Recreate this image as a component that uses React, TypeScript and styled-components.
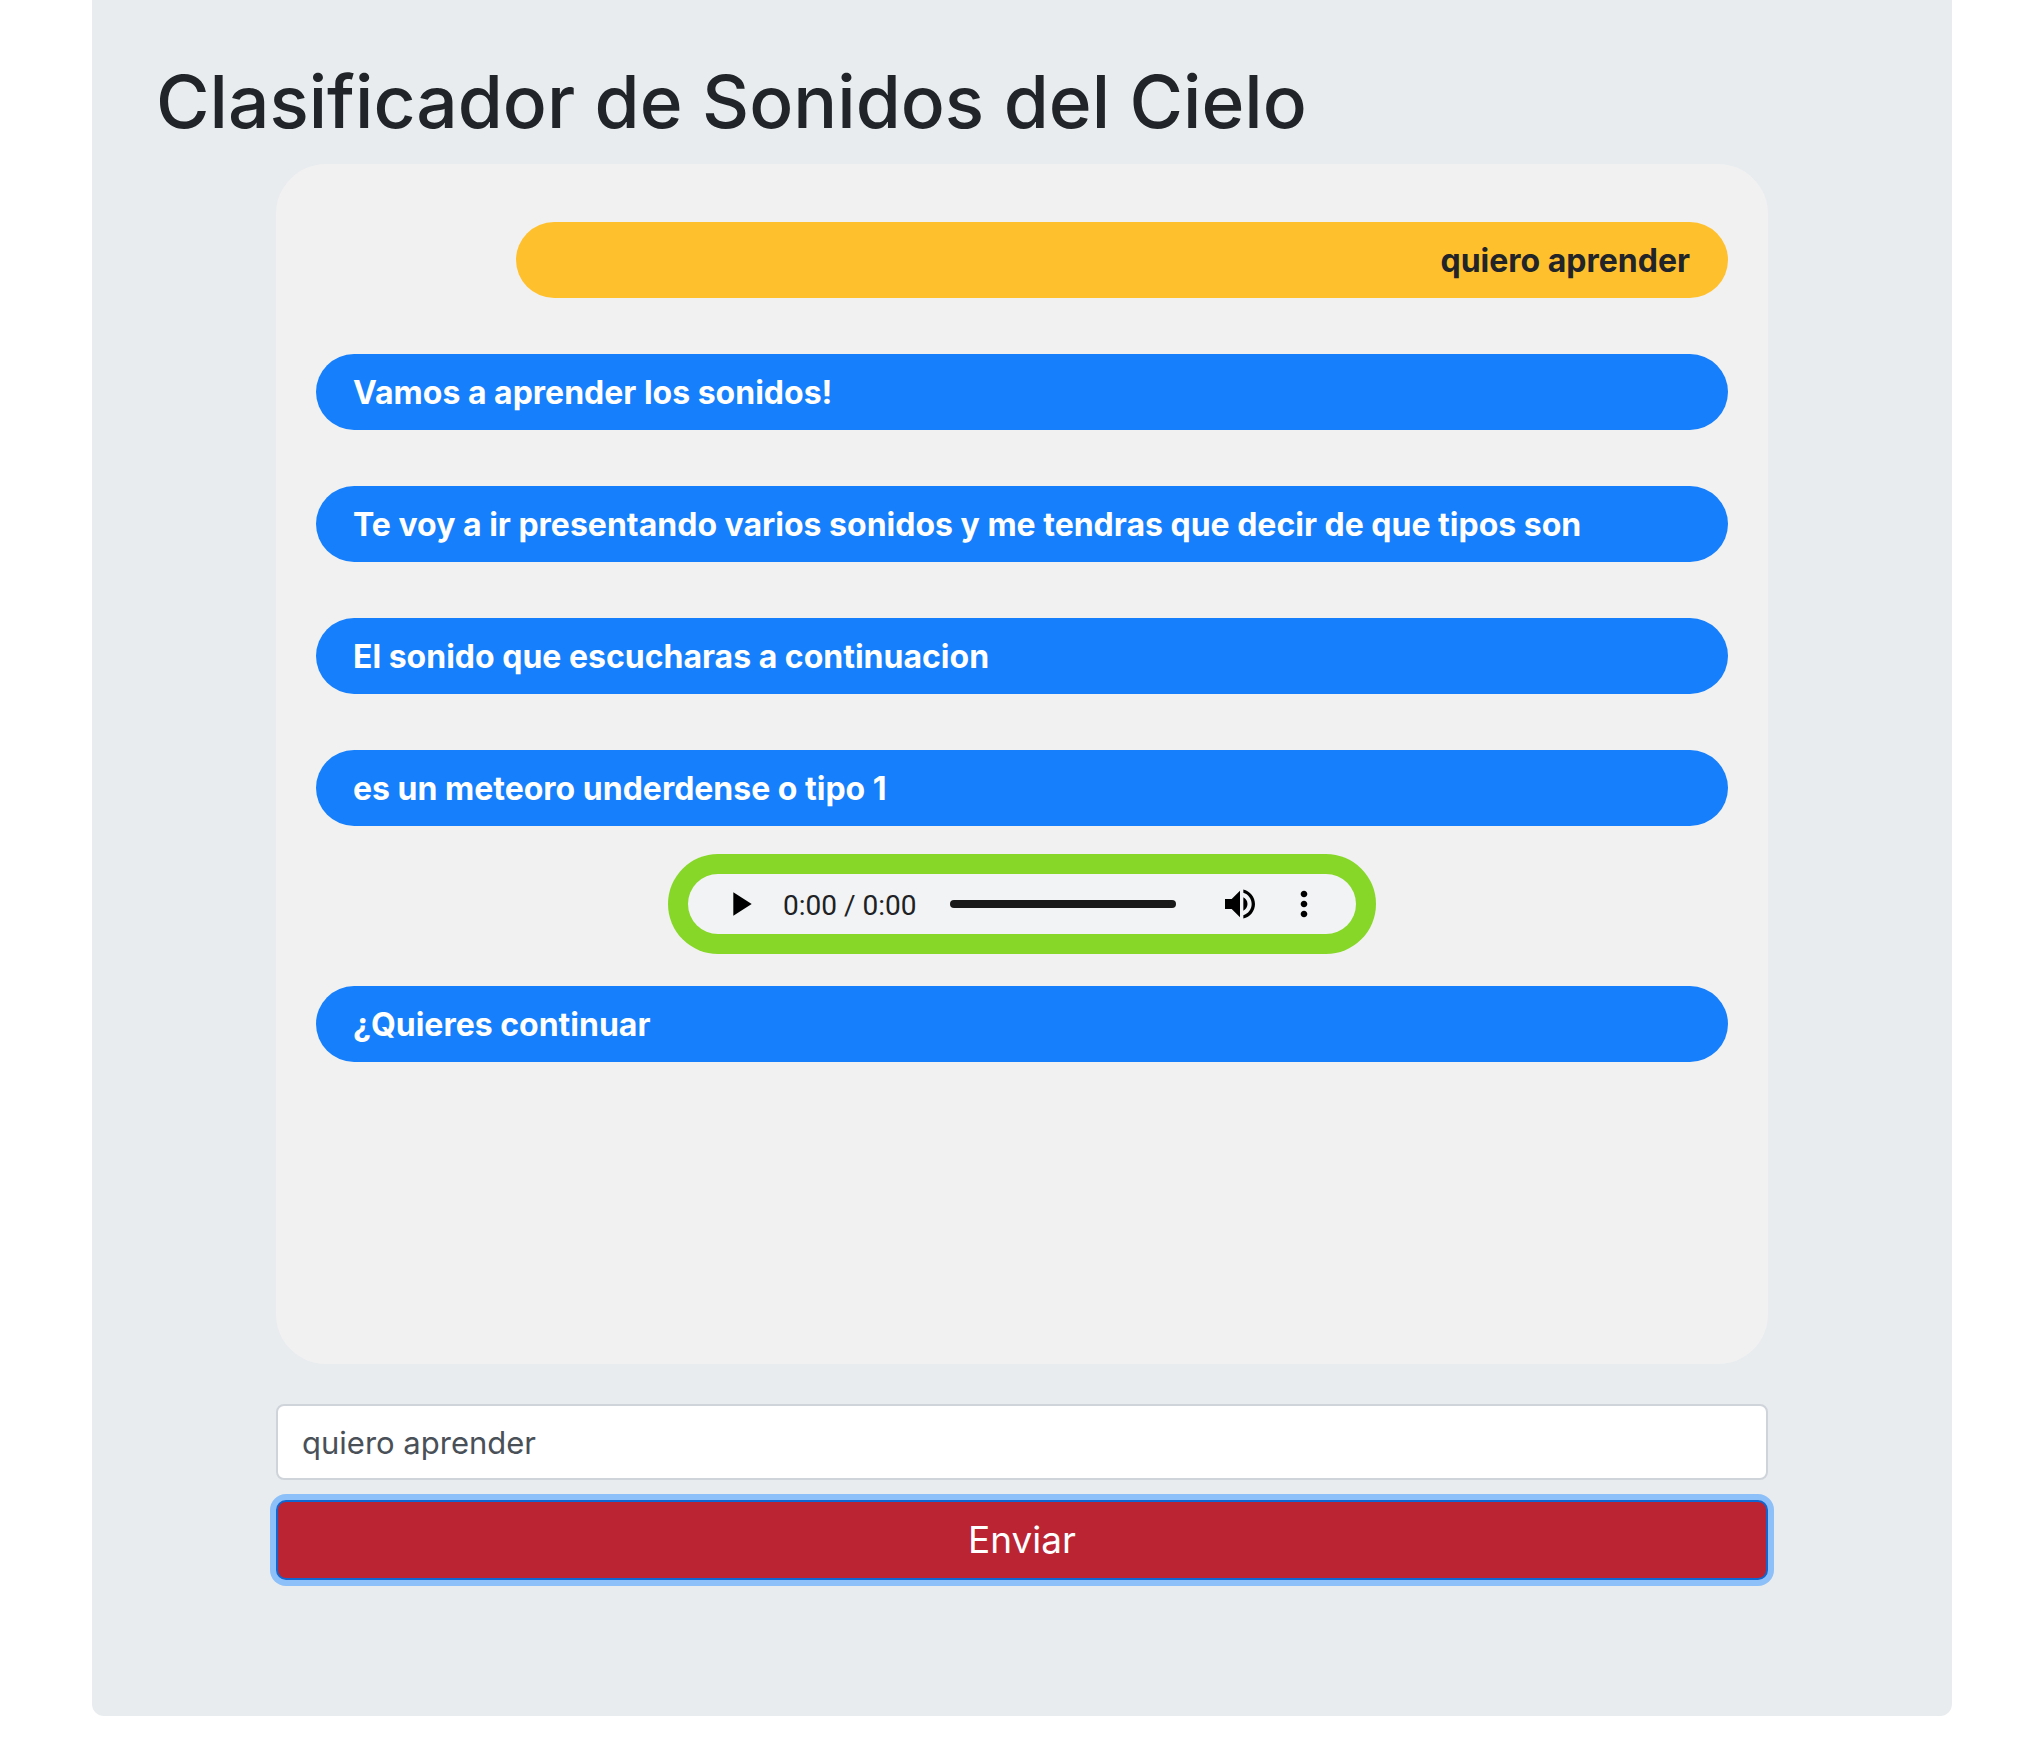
import React, { useState } from "react";
import styled, { createGlobalStyle } from "styled-components";

const GlobalStyle = createGlobalStyle`
  *, *::before, *::after { box-sizing: border-box; }
  body {
    margin: 0;
    background: #fff;
    color: #212529;
    font-family: Inter, "Liberation Sans", sans-serif;
    font-size: 32px;
    line-height: 48px;
  }
  button, input { font-family: inherit; }
`;

const Jumbotron = styled.main`
  margin: 0 68px 40px 92px;
  padding: 54px 64px 136px;
  background: #e8ecef;
  border-radius: 0 0 12px 12px;
`;

const Title = styled.h1`
  margin: 0 0 14px;
  font-size: 73px;
  font-weight: 500;
  line-height: 96px;
`;

const Content = styled.div`
  display: flex;
  flex-direction: column;
  padding: 0 120px;
`;

const Chat = styled.section`
  display: flex;
  flex-direction: column;
  min-height: 1200px;
  padding: 30px 40px;
  background: #f1f1f1;
  border-radius: 50px;
`;

const Bubble = styled.p<{ $own?: boolean }>`
  margin: 28px 0 28px ${(p) => (p.$own ? "200px" : "0")};
  padding: 15px 38px 13px 37px;
  border-radius: 38px;
  background: ${(p) => (p.$own ? "#ffc02e" : "#167ffc")};
  color: ${(p) => (p.$own ? "#212529" : "#fff")};
  font-weight: 700;
  text-align: ${(p) => (p.$own ? "right" : "left")};
`;

const PlayerFrame = styled.div`
  align-self: center;
  width: 708px;
  max-width: 100%;
  margin-bottom: 4px;
  padding: 20px;
  border-radius: 50px;
  background: #87d728;
`;

const Player = styled.div`
  display: flex;
  align-items: center;
  height: 60px;
  padding: 0 20px;
  border-radius: 30px;
  background: #f1f3f4;
`;

const IconButton = styled.button`
  display: flex;
  align-items: center;
  justify-content: center;
  flex: none;
  width: 64px;
  height: 60px;
  padding: 0;
  border: 0;
  background: none;
  color: #000;
`;

const Time = styled.span`
  margin: 0 34px 0 11px;
  padding-top: 4px;
  color: #202124;
  font-family: Roboto, sans-serif;
  font-size: 28px;
  white-space: nowrap;
`;

const Seek = styled.input`
  flex: 1;
  min-width: 0;
  height: 8px;
  margin: 0 32px 0 0;
  border-radius: 4px;
  background: #191919;
  appearance: none;

  &::-webkit-slider-thumb {
    width: 0;
    height: 0;
    appearance: none;
  }
`;

const MessageForm = styled.form`
  display: flex;
  flex-direction: column;
  gap: 20px;
  margin-top: 40px;
`;

const MessageInput = styled.input`
  width: 100%;
  height: 76px;
  padding: 12px 24px;
  border: 2px solid #ced4da;
  border-radius: 8px;
  background: #fff;
  color: #495057;
  font-size: 31px;
  line-height: 48px;
`;

const SendButton = styled.button`
  padding: 8px 16px;
  border: 2px solid #1266cf;
  border-radius: 10px;
  background: #ba2433;
  box-shadow: 0 0 0 6px #8dc0f8;
  color: #fff;
  font-size: 37px;
  line-height: 60px;
`;

const replies = [
  "Vamos a aprender los sonidos!",
  "Te voy a ir presentando varios sonidos y me tendras que decir de que tipos son",
  "El sonido que escucharas a continuacion",
  "es un meteoro underdense o tipo 1",
];

function AudioPlayer() {
  return (
    <PlayerFrame>
      <Player>
        <IconButton type="button" aria-label="Reproducir">
          <svg width="40" height="40" viewBox="0 0 24 24" fill="currentColor">
            <path d="M8 5v14l11-7z" />
          </svg>
        </IconButton>
        <Time>0:00 / 0:00</Time>
        <Seek type="range" min="0" max="100" defaultValue="0" aria-label="Posición" />
        <IconButton type="button" aria-label="Silenciar">
          <svg width="40" height="40" viewBox="0 0 24 24" fill="currentColor">
            <path d="M3 9v6h4l5 5V4L7 9H3zm13.5 3c0-1.77-1.02-3.29-2.5-4.03v8.05c1.48-.73 2.5-2.25 2.5-4.02zM14 3.23v2.06c2.89.86 5 3.54 5 6.71s-2.11 5.85-5 6.71v2.06c4.01-.91 7-4.49 7-8.77s-2.99-7.86-7-8.77z" />
          </svg>
        </IconButton>
        <IconButton type="button" aria-label="Más opciones">
          <svg width="40" height="40" viewBox="0 0 24 24" fill="currentColor">
            <path d="M12 8c1.1 0 2-.9 2-2s-.9-2-2-2-2 .9-2 2 .9 2 2 2zm0 2c-1.1 0-2 .9-2 2s.9 2 2 2 2-.9 2-2-.9-2-2-2zm0 6c-1.1 0-2 .9-2 2s.9 2 2 2 2-.9 2-2-.9-2-2-2z" />
          </svg>
        </IconButton>
      </Player>
    </PlayerFrame>
  );
}

export default function App() {
  const [message, setMessage] = useState("quiero aprender");

  return (
    <>
      <GlobalStyle />
      <Jumbotron>
        <Title>Clasificador de Sonidos del Cielo</Title>
        <Content>
          <Chat>
            <Bubble $own>quiero aprender</Bubble>
            {replies.map((text) => (
              <Bubble key={text}>{text}</Bubble>
            ))}
            <AudioPlayer />
            <Bubble>¿Quieres continuar</Bubble>
          </Chat>
          <MessageForm onSubmit={(e) => e.preventDefault()}>
            <MessageInput
              type="text"
              aria-label="Mensaje"
              value={message}
              onChange={(e) => setMessage(e.target.value)}
            />
            <SendButton type="submit">Enviar</SendButton>
          </MessageForm>
        </Content>
      </Jumbotron>
    </>
  );
}
